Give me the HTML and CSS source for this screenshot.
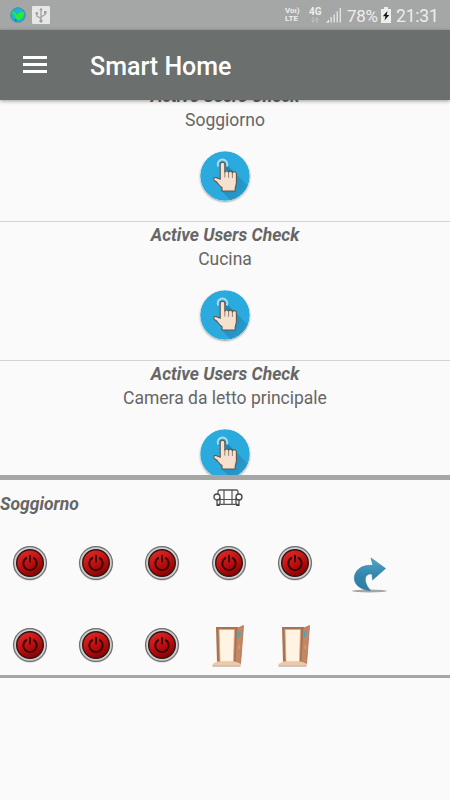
FILE: index.html
```
<!DOCTYPE html>
<html lang="it">
<head>
<meta charset="utf-8">
<meta name="viewport" content="width=device-width, initial-scale=1.0">
<title>Smart Home</title>
<link rel="stylesheet" href="styles.css">
</head>

<body>
<!-- shared icons -->
<svg class="defs" width="0" height="0">
	<defs>
		<linearGradient id="red" x1="0.2" y1="0" x2="0.7" y2="1">
			<stop offset="0" stop-color="#e42a2a"/>
			<stop offset="0.5" stop-color="#c01010"/>
			<stop offset="1" stop-color="#860000"/>
		</linearGradient>
		<linearGradient id="blue" x1="0" y1="0" x2="0" y2="1">
			<stop offset="0" stop-color="#4fa9cc"/>
			<stop offset="0.5" stop-color="#3487ae"/>
			<stop offset="1" stop-color="#2e7ba3"/>
		</linearGradient>
		<linearGradient id="shade" x1="0" y1="0" x2="1" y2="1">
			<stop offset="0" stop-color="#1f82ae"/>
			<stop offset="1" stop-color="#2aa3d6"/>
		</linearGradient>
		<clipPath id="disc"><circle cx="25" cy="25" r="24.5"/></clipPath>
	</defs>
	<symbol id="touch" viewBox="0 0 50 50">
		<circle cx="25" cy="25" r="24.800" fill="#2aaadd"/>
		<path clip-path="url(#disc)" fill="url(#shade)" d="M25 12L52 39V52H33L21 39L27 28Z"/>
		<path d="M18.200 15.500a4.800 4.800 0 1 1 8.600 0" fill="none" stroke="#a9dff5" stroke-width="1.900"/>
		<path d="M20.200 13.500a2.300 2.300 0 0 1 4.600 0V21.500a2 2 0 0 1 3.800-.2a2 2 0 0 1 3.800.6a2.100 2.100 0 0 1 4 .9V31c0 3-.8 4.500-1.200 6v3H22V36.500C19 35 18 31.500 14.800 29.800c-2-1.300-1.200-3.800 1.200-3.200l4.200 1.600Z" fill="#f5e1cd" stroke="#5f564f" stroke-width="1.100"/>
		<path d="M24.800 21v5.500M28.600 21.800v5M32.400 22.500v4.500" stroke="#86786c" stroke-width=".9" fill="none"/>
	</symbol>
	<symbol id="power" viewBox="0 0 36 36">
		<circle cx="18" cy="18.500" r="17.300" fill="#d8d8d8"/>
		<circle cx="18" cy="18" r="16.400" fill="#cfcfcf" stroke="#6e6e6e" stroke-width="1.200"/>
		<circle cx="18" cy="18" r="13.300" fill="url(#red)" stroke="#301616" stroke-width="1.400"/>
		<path d="M14.800 12.600a6.700 6.700 0 1 0 6.400 0M18 10v7.300" fill="none" stroke="#2b0505" stroke-width="1.900"/>
	</symbol>
	<symbol id="door" viewBox="0 0 34 44">
		<path d="M4 3H26V38H5Z" fill="#a97352"/>
		<path d="M7 5.500H22.500L21.500 38H8Z" fill="#fff4e3" stroke="#d5ab88" stroke-width=".8"/>
		<path d="M25 4.500L31.500 1.500L28.500 40L23 37.500Z" fill="#c58664" stroke="#ab7050" stroke-width=".8"/>
		<path d="M26 8.500l2.500-2v5l-2.500 2Z" fill="#40a9c6"/>
		<path d="M27.200 21v4" stroke="#e0a060" stroke-width="1.200"/>
		<path d="M5 37.500H23L29.500 40L28.500 41.500H.5V40Z" fill="#edc9a9"/>
		<path d="M.5 42H28.500" stroke="#c2b4a9" stroke-width="1.500"/>
	</symbol>
</svg>

<div class="statusbar">
	<svg class="globe" viewBox="0 0 16 16">
		<circle cx="8" cy="8" r="7.300" fill="#18b4e0" stroke="#4a8290" stroke-width=".8"/>
		<path d="M2 4L5 5.500L7.500 8L10 5L14.500 5.500L13 9.500L9.500 13L5.500 12.500L4 10.500L6 9.500L2.500 6.500Z" fill="#2ee83a"/>
		<path d="M4 11l3 1.500-1 2.200Z" fill="#127b93"/>
	</svg>
	<svg class="usb" viewBox="0 0 18 18">
		<rect width="18" height="18" rx="1" fill="#e6e7e6"/>
		<path d="M9 3v12M9 12.500L4.800 10V7M9 11l4.200-2.500V6" fill="none" stroke="#9c9d9c" stroke-width="1.200"/>
		<path d="M9 1.500l1.700 2.700H7.300ZM12 5h2.500v2.500H12Z" fill="#9c9d9c"/>
		<circle cx="4.800" cy="7.200" r="1.300" fill="#9c9d9c"/>
		<circle cx="9" cy="15" r="1.700" fill="#9c9d9c"/>
	</svg>
	<div class="volte"><span>Voı)</span><span>LTE</span></div>
	<div class="net">
		<span>4G</span>
		<svg viewBox="0 0 10 6"><path d="M3 0v5M1.500 3.500L3 5.200L4.500 3.500M7 6V1M5.500 2.500L7 .8L8.500 2.500" fill="none" stroke="#c4c5c4"/></svg>
	</div>
	<svg class="signal" viewBox="0 0 16 16">
		<path d="M0 15.500L3 12.500V15.500Z" fill="#eeefee"/>
		<path d="M5.200 15.500V10M8.200 15.500V7.500M11.200 15.500V4.500M14.300 15.500V1" stroke="#e6e7e6" stroke-width="1.300"/>
	</svg>
	<span class="percent">78%</span>
	<svg class="battery" viewBox="0 0 10 16">
		<path d="M3 0h4v2h3v14H0V2h3Z" fill="#ededed"/>
		<path d="M6.500 4L1.800 9.200H4.500L3.500 13.500L8.300 8H5.700Z" fill="#151515"/>
	</svg>
	<span class="clock">21:31</span>
</div>

<header class="appbar">
	<div class="menu"><span></span><span></span><span></span></div>
	<h1>Smart Home</h1>
</header>

<main class="viewport">
	<ul class="checks">
		<li class="check">
			<h2>Active Users Check</h2>
			<p>Soggiorno</p>
			<svg class="touch"><use href="#touch"/></svg>
		</li>
		<li class="check">
			<h2>Active Users Check</h2>
			<p>Cucina</p>
			<svg class="touch"><use href="#touch"/></svg>
		</li>
		<li class="check">
			<h2>Active Users Check</h2>
			<p>Camera da letto principale</p>
			<svg class="touch"><use href="#touch"/></svg>
		</li>
	</ul>
</main>

<section class="room">
	<div class="room-head">
		<h2>Soggiorno</h2>
		<svg class="sofa" viewBox="0 0 30 18">
			<path d="M5 6V2.500Q5 1 7 1H23Q25 1 25 2.500V6" fill="none" stroke="#555" stroke-width="1.300"/>
			<path d="M6 10.500H24M4 15.300H26M11 1V15M19 1V15" fill="none" stroke="#555" stroke-width="1.200"/>
			<path d="M4 10v6.500h3M26 10v6.500h-3M7 9v6M23 9v6" fill="none" stroke="#444" stroke-width="1.200"/>
			<circle cx="4" cy="8" r="3" fill="#fafafa" stroke="#444" stroke-width="1.300"/>
			<circle cx="26" cy="8" r="3" fill="#fafafa" stroke="#444" stroke-width="1.300"/>
		</svg>
	</div>
	<div class="room-body">
		<div class="devices">
			<svg class="power"><use href="#power"/></svg>
			<svg class="power"><use href="#power"/></svg>
			<svg class="power"><use href="#power"/></svg>
			<svg class="power"><use href="#power"/></svg>
			<svg class="power"><use href="#power"/></svg>
			<svg class="power"><use href="#power"/></svg>
			<svg class="power"><use href="#power"/></svg>
			<svg class="power"><use href="#power"/></svg>
			<svg class="door"><use href="#door"/></svg>
			<svg class="door"><use href="#door"/></svg>
		</div>
		<svg class="go" viewBox="0 0 36 37">
			<ellipse cx="17.500" cy="34" rx="17.500" ry="1.400" fill="#a5a5a5"/>
			<path d="M19 1L33.500 11.500L20.500 23L20 17C13 16 10 23.500 18.500 33.500C7 33 1 26 2.500 19C4.500 11 12 7.500 21 8.500Z" fill="url(#blue)" stroke="#36799a" stroke-width=".6"/>
		</svg>
	</div>
</section>
</body>
</html>
```

FILE: styles.css
```
* {
	box-sizing: border-box;
}
body {
	margin: 0;
	height: 800px;
	overflow: hidden;
	background-color: #fafafa;
	color: #666;
	font-family: Roboto, sans-serif;
	font-size: 17.5px;
}
h1, h2, p, ul {
	margin: 0;
	padding: 0;
}
svg {
	display: block;
	flex: none;
}
.defs {
	position: absolute;
}

/* android status bar */
.statusbar {
	display: flex;
	align-items: center;
	height: 30px;
	padding: 0 12px 0 10px;
	background-color: #a5a7a6;
	color: #ededed;
}
.globe {
	width: 16px;
	height: 16px;
}
.usb {
	width: 18px;
	height: 18px;
	margin-left: 6px;
}
.volte {
	display: flex;
	flex-direction: column;
	width: 16px;
	margin-left: auto;
	font-size: 8px;
	font-weight: 700;
	line-height: 8px;
}
.net {
	width: 13px;
	margin-left: 8px;
	font-size: 10px;
	font-weight: 700;
	line-height: 10px;
}
.net svg {
	width: 10px;
	height: 6px;
	margin-left: 1px;
}
.signal {
	width: 16px;
	height: 16px;
	margin-left: 4px;
}
.percent, .clock {
	padding-top: 1px;
	line-height: 30px;
	white-space: nowrap;
}
.percent {
	width: 30px;
	margin-left: 5px;
	font-size: 17px;
	letter-spacing: -0.3px;
}
.battery {
	width: 10px;
	height: 16px;
	margin-left: 4px;
}
.clock {
	width: 42px;
	margin-left: 5px;
	font-size: 17.5px;
	letter-spacing: -0.2px;
}

.appbar {
	position: relative;
	display: flex;
	align-items: center;
	height: 70px;
	padding-left: 23px;
	background-color: #6b6f6e;
	box-shadow: 0 1px 4px rgba(0,0,0,0.4);
	color: #fff;
}
.menu {
	display: flex;
	flex-direction: column;
	gap: 4px;
	width: 24px;
	margin-bottom: 2px;
}
.menu span {
	height: 3px;
	background-color: #fff;
}
.appbar h1 {
	margin-left: 43px;
	padding-top: 3px;
	font-size: 25px;
	font-weight: 500;
}

/* list is scrolled a little under the app bar */
.viewport {
	height: 375px;
	overflow: hidden;
}
.checks {
	margin-top: -17px;
	list-style: none;
}
.check {
	display: flex;
	flex-direction: column;
	align-items: center;
	height: 139px;
	padding-top: 1px;
	border-bottom: 1px solid #d3d3d3;
	line-height: 24px;
}
.check h2, .room h2 {
	font-size: 17.5px;
	font-weight: 700;
	font-style: italic;
}
.touch {
	width: 50px;
	height: 50px;
	margin-top: 19px;
	border-radius: 50%;
	box-shadow: 0 1px 2px rgba(0,0,0,0.35);
}

.room {
	height: 203px;
	border-top: 5px solid #a6a6a6;
	border-bottom: 3px solid #a6a6a6;
}
.room-head {
	display: grid;
	grid-template-columns: 213px 30px;
	align-items: start;
	height: 60px;
}
.room-head h2 {
	padding-top: 12px;
	line-height: 24px;
}
.sofa {
	width: 30px;
	height: 18px;
	margin-top: 9px;
}
.room-body {
	display: flex;
	align-items: flex-start;
}
.devices {
	display: grid;
	grid-template-columns: repeat(5, 66.2px);
	grid-template-rows: 46px 46px;
	row-gap: 36px;
	align-items: center;
	justify-items: center;
	margin-left: -3px;
}
.power {
	width: 36px;
	height: 36px;
}
.door {
	width: 34px;
	height: 44px;
	margin-top: 2px;
}
.go {
	width: 36px;
	height: 37px;
	margin: 17px 0 0 24px;
}
```
